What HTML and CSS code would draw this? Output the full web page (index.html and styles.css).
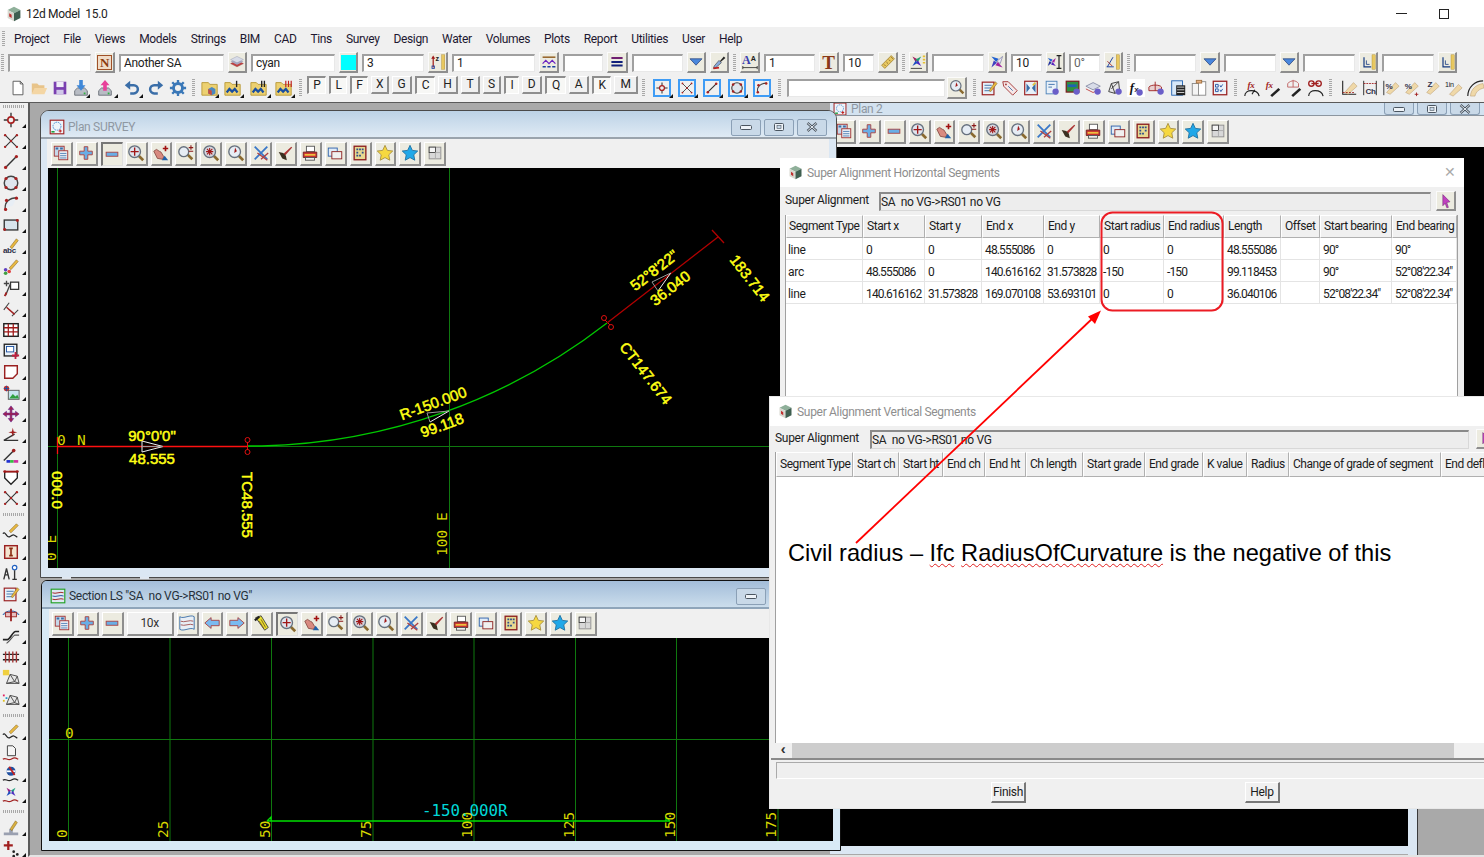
FILE: index.html
```html
<!DOCTYPE html>
<html lang="en">
<head>
<meta charset="utf-8">
<title>12d Model 15.0</title>
<link rel="stylesheet" href="styles.css">
</head>
<body>
<svg class="defs" aria-hidden="true">
<defs>
<symbol id="cmin" viewBox="0 0 16 10"><rect x="2.500" y="3.500" width="11" height="4" rx="1" fill="#eef3f8" stroke="#4a5560"/></symbol>
<symbol id="cmax" viewBox="0 0 16 10"><rect x="3.500" y="1.500" width="9" height="7" rx="1" fill="#eef3f8" stroke="#4a5560"/><rect x="6" y="3.500" width="4" height="3" fill="#c9d9e8" stroke="#4a5560" stroke-width=".6"/></symbol>
<symbol id="cx" viewBox="0 0 16 10"><path d="M3.500 1l9 8M12.500 1l-9 8" stroke="#4a5560" stroke-width="2.400"/><path d="M3.500 1l9 8M12.500 1l-9 8" stroke="#e8eef4" stroke-width="1"/></symbol>
<symbol id="cube" viewBox="0 0 20 20"><path d="M2 5l8-4 8 4-8 4z" fill="#8fb09a"/><path d="M2 5l8 4v10l-8-4z" fill="#d8d8d0"/><path d="M10 9l8-4v10l-8 4z" fill="#3f5f50"/><path d="M4 9l3 2v4l-3-2z" fill="#c03030"/></symbol>
<symbol id="sheet" viewBox="0 0 20 20"><rect x="2.500" y="2.500" width="11" height="11" fill="#c6d8ea" stroke="#a03030"/><path d="M4 5h3M9 5h3" stroke="#3a6ea8" stroke-width="2"/><rect x="7.500" y="7.500" width="10" height="10" fill="#e8eef5" stroke="#a03030"/><path d="M9 10.500h7M9 13h7M9 15.500h7" stroke="#4f7fb5"/></symbol>
<symbol id="plus" viewBox="0 0 20 20"><path d="M8 3h4v5h5v4h-5v5H8v-5H3V8h5z" fill="#69aee6" stroke="#a84040"/></symbol>
<symbol id="minus" viewBox="0 0 20 20"><rect x="3.500" y="8" width="13" height="4.500" fill="#69aee6" stroke="#a84040"/></symbol>
<symbol id="zm" viewBox="0 0 20 20"><path d="M13 13l5 5" stroke="#8a6a30" stroke-width="3"/><circle cx="8.500" cy="8.500" r="6.500" fill="#dfe5ee" stroke="#66707e" stroke-width="1.500"/><path d="M8.500 4v9M4 8.500h9" stroke="#a01818" stroke-width="1.500"/></symbol>
<symbol id="zpm" viewBox="0 0 20 20"><path d="M11 11l6 6" stroke="#8a6a30" stroke-width="3"/><circle cx="7.500" cy="8.500" r="5.500" fill="#e6edf5" stroke="#66707e" stroke-width="1.500"/><path d="M13 4h5M15.500 1.500v5M13 8h5" stroke="#8a1818" stroke-width="1.200"/></symbol>
<symbol id="zred" viewBox="0 0 20 20"><path d="M13 13l5 5" stroke="#8a6a30" stroke-width="3"/><circle cx="8.500" cy="8.500" r="6.500" fill="#d5d8e0" stroke="#66707e" stroke-width="1.500"/><path d="M5.500 5.500l6 6M11.500 5.500l-6 6M8.500 4.500v8M4.500 8.500h8" stroke="#a01818" stroke-width="1.200"/></symbol>
<symbol id="zpt" viewBox="0 0 20 20"><path d="M13 13l5 5" stroke="#8a6a30" stroke-width="3"/><circle cx="8.500" cy="8.500" r="6.500" fill="#e6edf5" stroke="#66707e" stroke-width="1.500"/><path d="M9 4l-1 6 3-2z" fill="#a01818"/></symbol>
<symbol id="hand" viewBox="0 0 20 20"><path d="M2 8l3-2 3 2 2 1 3 5-1 3-6-1z" fill="#d88a80" stroke="#8c5048"/><path d="M11 18l3-5 4 5z" fill="#2060a8"/><path d="M15 2v6M12 5h6" stroke="#a01010" stroke-width="1.800"/></symbol>
<symbol id="xchk" viewBox="0 0 20 20"><path d="M3 3l14 14M3 17L17 3" stroke="#3a78c8" stroke-width="2"/><path d="M6 10l11 8M10 17l8-7" stroke="#b04040" stroke-width="1.500"/></symbol>
<symbol id="brush" viewBox="0 0 20 20"><path d="M8 11L17 3l1 1-8 9z" fill="#a33"/><path d="M3 9l5 1 3 3 1 5-5-2z" fill="#3a3020"/></symbol>
<symbol id="print" viewBox="0 0 20 20"><rect x="6" y="2.500" width="9" height="6" fill="#fff" stroke="#555"/><path d="M2.500 9h15v6h-15z" fill="#c83030" stroke="#702020"/><path d="M4 12h12" stroke="#f0c040" stroke-width="2"/><rect x="5" y="15" width="10" height="3" fill="#eee" stroke="#555"/></symbol>
<symbol id="wins" viewBox="0 0 20 20"><rect x="2.500" y="4.500" width="10" height="9" fill="#e0ecf8" stroke="#2a5fa8"/><rect x="6.500" y="8.500" width="11" height="8" fill="#f0f0f0" stroke="#8c2020"/></symbol>
<symbol id="grid" viewBox="0 0 20 20"><rect x="3.500" y="2.500" width="13" height="15" fill="#e8d890" stroke="#8c2020" stroke-width="1.500"/><path d="M6 5h2v2H6zM9 5h2v2H9zM12 5h2v2h-2zM6 8.500h2v2H6zM12 8.500h2v2h-2zM6 12h2v2H6zM9 12h2v2H9z" fill="#2d4f8c"/></symbol>
<symbol id="stary" viewBox="0 0 20 20"><path d="M10 1.500l2.600 5.600 6 .7-4.400 4.200 1.100 6L10 15.100 4.700 18l1.100-6-4.400-4.200 6-.7z" fill="#f6d840" stroke="#a89040"/></symbol>
<symbol id="starb" viewBox="0 0 20 20"><path d="M10 1.500l2.600 5.600 6 .7-4.400 4.200 1.100 6L10 15.100 4.700 18l1.100-6-4.400-4.200 6-.7z" fill="#20a8e8" stroke="#2070a0"/></symbol>
<symbol id="panes" viewBox="0 0 20 20"><rect x="3.500" y="3.500" width="13" height="13" fill="#d8d8d8" stroke="#8c8c8c"/><rect x="3.500" y="3.500" width="7" height="6" fill="#f5f5f5" stroke="#444"/><path d="M10.500 9.500v7M10.500 9.500h6" stroke="#aaa"/></symbol>
<symbol id="layers" viewBox="0 0 20 20"><path d="M2 12l8-4 8 4-8 4z" fill="#c04040" stroke="#903030" stroke-width=".5"/><path d="M2 9.500l8-4 8 4-8 4z" fill="#a8a8c0"/><path d="M2 7l8-4 8 4-8 4z" fill="#d8dce8" stroke="#8a90a8" stroke-width=".5"/></symbol>
<symbol id="zr" viewBox="0 0 20 20"><path d="M4 4v13" stroke="#a01818" stroke-width="1.500"/><path d="M1.500 6L4 2l2.500 4z" fill="#a01818"/><rect x="2.500" y="15" width="3" height="3" fill="none" stroke="#1a3fa0"/><text x="7" y="9" class="svgb">z</text><rect x="14.500" y="1" width="4" height="18" fill="#e8c860" stroke="#a88830" stroke-width=".5"/></symbol>
<symbol id="zig" viewBox="0 0 20 20"><path d="M2 4h16" stroke="#9a6a30" stroke-width="2"/><path d="M2 12l4-4 4 4 4-4 4 4" fill="none" stroke="#6a20c0" stroke-width="1.500"/><path d="M2 16h4M8 16h4M14 16h4" stroke="#1a3fa0" stroke-width="2"/></symbol>
<symbol id="lines" viewBox="0 0 20 20"><path d="M3 5h14" stroke="#702070" stroke-width="2.500"/><path d="M3 10h14M3 14.500h14" stroke="#10207a" stroke-width="2.500"/></symbol>
<symbol id="tri" viewBox="0 0 20 20"><path d="M2.500 6h15L10 14z" fill="#4a88dc" stroke="#304a80"/></symbol>
<symbol id="drop" viewBox="0 0 20 20"><path d="M11 9l5-6 2 2-6 5z" fill="#222"/><path d="M10 8l3 3-7 6-3 1 1-3z" fill="#8ad" stroke="#333" stroke-width=".7"/><path d="M3 18l7-1" stroke="#c02020" stroke-width="2"/></symbol>
<symbol id="aa" viewBox="0 0 20 20"><text x="0" y="13" class="svgaa">A</text><text x="11" y="9" class="svgab">A</text><path d="M1 17h18" stroke="#222"/><path d="M1 15v4M19 15v4" stroke="#222"/></symbol>
<symbol id="rule" viewBox="0 0 20 20"><path d="M2 14L14 2l4 4L6 18z" fill="#e8c860" stroke="#a08030"/><path d="M5 13l2 2M8 10l2 2M11 7l2 2M14 4l2 2" stroke="#806020"/></symbol>
<symbol id="pin" viewBox="0 0 20 20"><path d="M3 3l7 4-3 3z" fill="#a02060"/><path d="M14 3l-4 7-3-3z" fill="#20a070"/><path d="M14 15l-7-4 3-3z" fill="#5020c0"/><path d="M3 15l4-7 3 3z" fill="#2050c0"/><path d="M1 18h14" stroke="#222"/><path d="M16 3h3M16 7h3M16 11h3" stroke="#e8c030" stroke-width="2"/></symbol>
<symbol id="pin2" viewBox="0 0 20 20"><path d="M3 3l9 3-3 4z" fill="#2060d0"/><path d="M17 3l-3 9-4-3z" fill="#e8e8f8" stroke="#88a"/><path d="M17 17l-9-3 3-4z" fill="#a020a0"/><path d="M3 17l3-9 4 3z" fill="#4040c0"/></symbol>
<symbol id="pin3" viewBox="0 0 20 20"><path d="M1 5l6 2-2 3z" fill="#2060d0"/><path d="M11 5l-2 6-3-2z" fill="#a020a0"/><path d="M11 15l-6-2 2-3z" fill="#5020c0"/><path d="M1 15l2-6 3 2z" fill="#2030a0"/><path d="M15 2v16M12 2h6M12 18h6" stroke="#222" stroke-width="1.500"/></symbol>
<symbol id="dimr" viewBox="0 0 20 20"><path d="M2 16h9M3 16L10 4" stroke="#1a3fa0" stroke-width="1.200"/><path d="M3 9l6 6" stroke="#a01818"/><rect x="14" y="1" width="4" height="18" fill="#e8c860" stroke="#a88830" stroke-width=".5"/></symbol>
<symbol id="ltool" viewBox="0 0 20 20"><path d="M5 4v12h9" fill="none" stroke="#143a80" stroke-width="1.500"/><path d="M8 8v5h4" fill="none" stroke="#143a80"/><rect x="15" y="1" width="4" height="18" fill="#e8c860" stroke="#a88830" stroke-width=".5"/></symbol>
<symbol id="new" viewBox="0 0 20 20"><path d="M4.500 2.500h8l3 3v12h-11z" fill="#fff" stroke="#555"/><path d="M12.500 2.500v3h3" fill="none" stroke="#555"/></symbol>
<symbol id="open" viewBox="0 0 20 20"><path d="M2 5h6l2 2h6v3H6l-4 7z" fill="#e8c48a"/><path d="M5 10h14l-3 7H2z" fill="#f4d6a4"/></symbol>
<symbol id="save" viewBox="0 0 20 20"><path d="M3 3h14v14H3z" fill="#7a3fb0"/><path d="M6 3h8v6H6z" fill="#f0ecf8"/><path d="M6 12h8v5H6z" fill="#d0c8e8"/></symbol>
<symbol id="imp" viewBox="0 0 20 20"><path d="M3 13l3-3h8l3 3v5H3z" fill="#b8bcc4" stroke="#6a6f78"/><path d="M8 1h4v6h3l-5 6-5-6h3z" fill="#3f88d8"/><rect x="13" y="15" width="2" height="2" fill="#30b040"/></symbol>
<symbol id="exp" viewBox="0 0 20 20"><path d="M3 13l3-3h8l3 3v5H3z" fill="#b8bcc4" stroke="#6a6f78"/><path d="M8 13V7H5l5-6 5 6h-3v6z" fill="#e8409a"/><rect x="13" y="15" width="2" height="2" fill="#30b040"/></symbol>
<symbol id="undo" viewBox="0 0 20 20"><path d="M6 7h6a4.500 4.500 0 0 1 0 9H8" fill="none" stroke="#3a6ea8" stroke-width="2.800"/><path d="M8 2v10L2 7z" fill="#3a6ea8"/></symbol>
<symbol id="redo" viewBox="0 0 20 20"><path d="M14 7H8a4.500 4.500 0 0 0 0 9h4" fill="none" stroke="#3a6ea8" stroke-width="2.800"/><path d="M12 2v10l6-5z" fill="#3a6ea8"/></symbol>
<symbol id="gear" viewBox="0 0 20 20"><circle cx="10" cy="10" r="5" fill="none" stroke="#3a78b8" stroke-width="3.200"/><path d="M10 1v4M10 15v4M1 10h4M15 10h4M3.600 3.600l3 3M13.400 13.400l3 3M16.400 3.600l-3 3M6.600 13.400l-3 3" stroke="#3a78b8" stroke-width="2.600"/></symbol>
<symbol id="fbox" viewBox="0 0 20 20"><path d="M1 4h7l2 2h8v12H1z" fill="#ecd070" stroke="#b89838"/><path d="M8 11l4-2 4 2v5l-4 2-4-2z" fill="#4a88c0"/><path d="M8 11l4 2v5l-4-2z" fill="#c85040"/></symbol>
<symbol id="f1" viewBox="0 0 20 20"><path d="M1 4h6l2 2h9v12H1z" fill="#ecd070" stroke="#b89838"/><path d="M3 15l3-4 3 3 3-3 3 4" fill="none" stroke="#1a4fa0" stroke-width="2.500"/><path d="M14 2v7" stroke="#222" stroke-width="1.500"/></symbol>
<symbol id="f2" viewBox="0 0 20 20"><path d="M1 4h6l2 2h9v12H1z" fill="#ecd070" stroke="#b89838"/><path d="M3 15l3-4 3 3 3-3 3 4" fill="none" stroke="#1a4fa0" stroke-width="2.500"/><path d="M13 2v7M16 2v7" stroke="#222" stroke-width="1.500"/></symbol>
<symbol id="f3" viewBox="0 0 20 20"><path d="M1 4h6l2 2h9v12H1z" fill="#ecd070" stroke="#b89838"/><path d="M3 15l3-4 3 3 3-3 3 4" fill="none" stroke="#1a4fa0" stroke-width="2.500"/><path d="M12 2v7M15 2v7M18 2v7" stroke="#c02020" stroke-width="1.300"/></symbol>
<symbol id="pt" viewBox="0 0 20 20"><path d="M10 2v16M2 10h16" stroke="#333" stroke-width="1.500"/><circle cx="10" cy="10" r="3.500" fill="#f0f0f0" stroke="#a82020" stroke-width="1.800"/></symbol>
<symbol id="x" viewBox="0 0 20 20"><path d="M3 3l14 14M17 3L3 17" stroke="#333" stroke-width="1.200"/><circle cx="3.500" cy="3.500" r="1.300" fill="#a82020"/><circle cx="16.500" cy="3.500" r="1.300" fill="#a82020"/><circle cx="10" cy="10" r="1.300" fill="#a82020"/><circle cx="3.500" cy="16.500" r="1.300" fill="#a82020"/><circle cx="16.500" cy="16.500" r="1.300" fill="#a82020"/></symbol>
<symbol id="ln" viewBox="0 0 20 20"><path d="M4 16L16 4" stroke="#333" stroke-width="1.600"/><circle cx="4" cy="16" r="1.800" fill="#a82020"/><circle cx="16" cy="4" r="1.800" fill="#a82020"/></symbol>
<symbol id="ci" viewBox="0 0 20 20"><circle cx="10" cy="10" r="7.500" fill="#dfe6ee" stroke="#444" stroke-width="1.600"/><circle cx="4.500" cy="5" r="1.800" fill="#a82020"/><circle cx="15.500" cy="5" r="1.800" fill="#a82020"/><circle cx="4.500" cy="15" r="1.800" fill="#a82020"/><circle cx="15.500" cy="15" r="1.800" fill="#a82020"/></symbol>
<symbol id="ar" viewBox="0 0 20 20"><path d="M4 17C2 8 8 3 17 3" fill="none" stroke="#444" stroke-width="1.600"/><path d="M4 14C5 8 9 5 15 5l-3 7z" fill="#e8eef5"/><circle cx="4" cy="16" r="1.800" fill="#a82020"/><circle cx="5" cy="6" r="1.800" fill="#a82020"/><circle cx="16" cy="3.500" r="1.800" fill="#a82020"/></symbol>
<symbol id="rc" viewBox="0 0 20 20"><rect x="2.500" y="4.500" width="15" height="11" fill="#d8e4ec" stroke="#333" stroke-width="1.500"/><circle cx="3" cy="15" r="1.600" fill="#a82020"/><circle cx="17" cy="5" r="1.600" fill="#a82020"/></symbol>
<symbol id="abc" viewBox="0 0 20 20"><path d="M9 11L16 2l2 2-7 9z" fill="#e8b840" stroke="#806020" stroke-width=".6"/><text x="1" y="18" class="svgsm">abc</text></symbol>
<symbol id="pen2" viewBox="0 0 20 20"><path d="M8 11L16 2l2 2-8 9z" fill="#e8b840" stroke="#806020" stroke-width=".6"/><circle cx="4" cy="13" r="2" fill="#6040c0"/><circle cx="8" cy="15" r="2" fill="#e04040"/><circle cx="4" cy="17" r="2" fill="#40a040"/></symbol>
<symbol id="tbox" viewBox="0 0 20 20"><rect x="9.500" y="3.500" width="9" height="8" fill="#fff" stroke="#333" stroke-width="1.400"/><path d="M4 18L9 6M2 5h6M5 2v6" stroke="#444" stroke-width="1.500"/><path d="M3 19l2-4" stroke="#a02020" stroke-width="2"/></symbol>
<symbol id="dimv" viewBox="0 0 20 20"><path d="M2 11L8 3M11 18l7-7" stroke="#444" stroke-width="1.200"/><path d="M5 8l9 8" stroke="#a02020" stroke-width="1.600"/></symbol>
<symbol id="table" viewBox="0 0 20 20"><rect x="2" y="3" width="16" height="14" fill="#fff" stroke="#222" stroke-width="1.600"/><path d="M2 7.500h16M2 12h16M7 3v14M12.500 3v14" stroke="#a01818" stroke-width="1.400"/></symbol>
<symbol id="boxp" viewBox="0 0 20 20"><rect x="2.500" y="2.500" width="14" height="13" fill="#e8f0f8" stroke="#222" stroke-width="1.500"/><rect x="5" y="5" width="8" height="6" fill="#fff" stroke="#1a4fa0"/><path d="M15 11v8M11 15h8" stroke="#c02040" stroke-width="2"/></symbol>
<symbol id="corn" viewBox="0 0 20 20"><path d="M3 3h14v9l-5 5H3z" fill="#fff" stroke="#9a2020" stroke-width="1.600"/></symbol>
<symbol id="pic" viewBox="0 0 20 20"><rect x="7" y="7" width="12" height="10" fill="#c8e4f0" stroke="#555"/><path d="M8 16l4-5 3 3 2-2 2 4z" fill="#30a040"/><circle cx="5" cy="5" r="3" fill="#c03030"/><path d="M2 5h6M5 2v6" stroke="#2050a0"/></symbol>
<symbol id="move" viewBox="0 0 20 20"><path d="M10 1l3 4h-2v4h4V7l4 3-4 3v-2h-4v4h2l-3 4-3-4h2v-4H5v2l-4-3 4-3v2h4V5H7z" fill="#a02050" stroke="#6a2a90" stroke-width=".7"/></symbol>
<symbol id="ang" viewBox="0 0 20 20"><path d="M2 16h16M2 16L14 9" stroke="#333" stroke-width="1.400"/><path d="M12 2l1 4 4 1-4 1-1 4-1-4-4-1 4-1z" fill="#a02020"/></symbol>
<symbol id="lnc" viewBox="0 0 20 20"><path d="M2 15L14 3" stroke="#333" stroke-width="1.600"/><circle cx="13" cy="4" r="2" fill="#a02020"/><path d="M5 16h4" stroke="#2030d0" stroke-width="3"/><path d="M9 16h4" stroke="#30c040" stroke-width="3"/><path d="M13 16h5" stroke="#d030a0" stroke-width="3"/></symbol>
<symbol id="poly" viewBox="0 0 20 20"><path d="M3 4h14v7l-7 7-7-7z" fill="#fff" stroke="#222" stroke-width="1.500"/><path d="M3 4h14" stroke="#a01818" stroke-width="2"/><circle cx="3" cy="4" r="1.600" fill="#a01818"/><circle cx="17" cy="4" r="1.600" fill="#a01818"/></symbol>
<symbol id="wpen" viewBox="0 0 20 20"><path d="M8 10L16 2l2 2-8 8z" fill="#e8b840" stroke="#806020" stroke-width=".6"/><path d="M1 13c3-4 4 6 8 3s4-2 8 1" fill="none" stroke="#222" stroke-width="1.400"/></symbol>
<symbol id="ibox" viewBox="0 0 20 20"><rect x="3" y="3" width="14" height="14" fill="#f4e4d0" stroke="#9a2020" stroke-width="1.600"/><path d="M8 6h4M8 14h4M10 6v8" stroke="#8a2a10" stroke-width="1.800"/></symbol>
<symbol id="ai" viewBox="0 0 20 20"><path d="M2 17l3-12 3 12M3.500 12h3" fill="none" stroke="#333" stroke-width="1.500"/><circle cx="14" cy="4" r="2.500" fill="#fff" stroke="#2060c0" stroke-width="1.300"/><path d="M14 7v10M11.500 17h5" stroke="#333" stroke-width="1.500"/></symbol>
<symbol id="note" viewBox="0 0 20 20"><rect x="2.500" y="3.500" width="13" height="14" fill="#e8f0f8" stroke="#9a2020" stroke-width="1.300"/><path d="M5 7h8M5 10h8M5 13h6" stroke="#3a6ea8"/><path d="M10 13l7-10 2 2-7 9z" fill="#e8b840" stroke="#705010" stroke-width=".5"/></symbol>
<symbol id="crs" viewBox="0 0 20 20"><path d="M1 10c3-6 15-6 18 0" fill="#a8c8e0" stroke="#2050a0"/><rect x="4" y="7" width="12" height="5" fill="#e8c0c0" stroke="#9a2020"/><path d="M10 3v14" stroke="#9a2020" stroke-width="2"/></symbol>
<symbol id="bend" viewBox="0 0 20 20"><path d="M1 14h5c3 0 6-9 9-9h4" fill="none" stroke="#222" stroke-width="1.800"/><path d="M5 18c3-1 6-7 9-9h5" fill="none" stroke="#555" stroke-width="1.200"/></symbol>
<symbol id="rail" viewBox="0 0 20 20"><path d="M1 7h18M1 13h18" stroke="#222" stroke-width="1.500"/><path d="M4 4v12M8 4v12M12 4v12M16 4v12" stroke="#a03030" stroke-width="1.500"/></symbol>
<symbol id="mesh1" viewBox="0 0 20 20"><path d="M5 16l4-10 8 2 2 8z" fill="#e8e8e8" stroke="#444"/><path d="M5 16l9-2 3-6M9 6l5 8 5 2" fill="none" stroke="#444"/><rect x="1" y="1" width="7" height="6" fill="#f0d040"/></symbol>
<symbol id="mesh2" viewBox="0 0 20 20"><path d="M5 16l4-10 8 2 2 8z" fill="#e8e8e8" stroke="#444"/><path d="M5 16l9-2 3-6M9 6l5 8 5 2" fill="none" stroke="#444"/><rect x="1" y="5" width="2" height="2" fill="#e02060"/><rect x="4" y="8" width="2" height="2" fill="#20a0d0"/><rect x="1" y="11" width="2" height="2" fill="#e0c020"/></symbol>
<symbol id="wdoc" viewBox="0 0 20 20"><path d="M6 2h6l3 3v8H6z" fill="#f4f4f4" stroke="#333"/><path d="M1 17c3-3 5 2 9 0s4-2 8 0" fill="none" stroke="#a02020" stroke-width="1.400"/></symbol>
<symbol id="wglobe" viewBox="0 0 20 20"><circle cx="10" cy="7" r="5" fill="#2050a0"/><path d="M5 7h10" stroke="#fff" stroke-width="2"/><path d="M8 2l6 9" stroke="#c02020" stroke-width="2"/><path d="M1 17c3-3 5 2 9 0s4-2 8 0" fill="none" stroke="#222" stroke-width="1.400"/></symbol>
<symbol id="wpin" viewBox="0 0 20 20"><path d="M5 2l5 3-2 3z" fill="#a02080"/><path d="M15 2l-3 6-2-3z" fill="#20a080"/><path d="M15 11l-5-3 2-3z" fill="#5030c0"/><path d="M5 11l3-6 2 3z" fill="#2050c0"/><path d="M1 17c3-3 5 2 9 0s4-2 8 0" fill="none" stroke="#a02020" stroke-width="1.400"/></symbol>
<symbol id="ibeam" viewBox="0 0 20 20"><path d="M2 15h16v3H2zM8 11h4v4H8z" fill="#9aa0b0"/><path d="M9 11l6-9 2 2-6 9z" fill="#d8b040" stroke="#705010" stroke-width=".5"/></symbol>
<symbol id="mv2" viewBox="0 0 20 20"><path d="M7 1v10M2 6h10" stroke="#a02020" stroke-width="2.500"/><circle cx="13" cy="13" r="1.500" fill="#222"/><circle cx="17" cy="16" r="1.500" fill="#222"/><circle cx="13" cy="18" r="1.500" fill="#222"/></symbol>
<symbol id="tag" viewBox="0 0 20 20"><path d="M2 3h6l10 10-5 5L3 8z" fill="#f6e8e8" stroke="#a03030"/><circle cx="5.500" cy="6" r="1" fill="#a03030"/><path d="M8 8l5 5" stroke="#3a6ea8"/></symbol>
<symbol id="bdoc" viewBox="0 0 20 20"><rect x="3" y="2.500" width="14" height="15" fill="#e8f0f8" stroke="#9a2020" stroke-width="1.300"/><path d="M5 5l4 5-4 5zM15 5l-4 5 4 5z" fill="#3a6ea8"/><path d="M12 7l3-3" stroke="#e0c040" stroke-width="2"/></symbol>
<symbol id="gdoc" viewBox="0 0 20 20"><rect x="3.500" y="2.500" width="12" height="14" fill="#e8f0f8" stroke="#4a80b8"/><path d="M6 6h7M6 9h4" stroke="#3a6ea8"/><circle cx="14" cy="14" r="3.500" fill="#6a5ec8"/></symbol>
<symbol id="gpic" viewBox="0 0 20 20"><rect x="2.500" y="2.500" width="14" height="12" fill="#309040" stroke="#7a2020" stroke-width="1.400"/><path d="M4 6h10v3H4z" fill="#2060b0"/><circle cx="14" cy="14" r="3.500" fill="#6a5ec8"/></symbol>
<symbol id="glay" viewBox="0 0 20 20"><path d="M1 8l8-4 8 4-8 4z" fill="#d8dce8" stroke="#8a90a8"/><path d="M1 11l8 4 6-3" fill="none" stroke="#c04040"/><circle cx="14" cy="14" r="3.500" fill="#6a5ec8"/></symbol>
<symbol id="gmsh" viewBox="0 0 20 20"><path d="M3 14l3-9 8-2 1 9-5 4z" fill="#e8e8e8" stroke="#333"/><path d="M6 5l4 11M14 3l-8 8" stroke="#333"/><circle cx="14" cy="14" r="3.500" fill="#6a5ec8"/></symbol>
<symbol id="fx" viewBox="0 0 20 20"><rect width="20" height="20" fill="#fff"/><text x="3" y="14" class="svgfx">f</text><text x="8" y="14" class="svgsm">x</text><circle cx="14" cy="15" r="3.500" fill="#6a5ec8"/></symbol>
<symbol id="cgear" viewBox="0 0 20 20"><path d="M1 9c2-3 12-3 14 0v4H1z" fill="#e8d0d0" stroke="#a02020"/><path d="M8 3v10" stroke="#a02020"/><circle cx="14" cy="14" r="3.500" fill="#6a5ec8"/></symbol>
<symbol id="ldoc" viewBox="0 0 20 20"><rect x="3" y="2" width="12" height="16" fill="#d8e8f8" stroke="#2060b0"/><rect x="8" y="7" width="10" height="11" fill="#222"/><path d="M9 9h8M9 12h8M9 15h8" stroke="#ddd"/></symbol>
<symbol id="paste" viewBox="0 0 20 20"><rect x="2.500" y="5" width="8" height="13" fill="#f4f4f4" stroke="#888"/><rect x="9.500" y="3" width="8" height="15" fill="#fff" stroke="#888"/><rect x="7" y="1.500" width="6" height="3" fill="#e8b080" stroke="#a07040"/></symbol>
<symbol id="chk" viewBox="0 0 20 20"><rect x="2.500" y="2.500" width="15" height="15" fill="#eef2f8" stroke="#9a2020" stroke-width="1.400"/><path d="M5 6h3v3H5zM5 11h3v3H5zM10 7l1 2 2-3M10 12l1 2 2-3" fill="none" stroke="#2050a0"/></symbol>
<symbol id="fxg" viewBox="0 0 20 20"><text x="5" y="10" class="svgfr">fx</text><path d="M2 19c0-8 14-8 16 0M10 17l3-5" fill="none" stroke="#222" stroke-width="1.300"/></symbol>
<symbol id="fxp" viewBox="0 0 20 20"><text x="2" y="10" class="svgfr">fx</text><path d="M7 18l9-8 2 2-9 8z" fill="#222"/></symbol>
<symbol id="dip" viewBox="0 0 20 20"><path d="M3 5c4-4 9-4 12 0v4H3z" fill="none" stroke="#c06060"/><path d="M9 1v8" stroke="#c06060"/><path d="M7 18l9-8 2 2-9 8z" fill="#222"/></symbol>
<symbol id="chain" viewBox="0 0 20 20"><circle cx="6" cy="5" r="3" fill="none" stroke="#a02020" stroke-width="1.500"/><circle cx="14" cy="5" r="3" fill="none" stroke="#a02020" stroke-width="1.500"/><path d="M6 5h8" stroke="#a02020" stroke-width="1.500"/><path d="M3 19c0-8 14-8 16 0" fill="none" stroke="#222" stroke-width="1.300"/></symbol>
<symbol id="r1" viewBox="0 0 20 20"><path d="M3 2v15h15" fill="none" stroke="#222" stroke-width="1.200"/><path d="M5 15L15 4l4 4-10 9z" fill="#efd8a8" stroke="#b09060" stroke-width=".5"/><path d="M3 15h13" stroke="#a02020" stroke-dasharray="2 1.500"/></symbol>
<symbol id="rch" viewBox="0 0 20 20"><path d="M3 2v16M17 2v16" stroke="#222"/><path d="M3 5h14" stroke="#a02020" stroke-dasharray="2 1"/><text x="5" y="17" class="svgsm">Ch</text></symbol>
<symbol id="rpc" viewBox="0 0 20 20"><path d="M2 2v16" stroke="#222"/><path d="M5 15L15 4l4 4-10 9z" fill="#efd8a8" stroke="#b09060" stroke-width=".5"/><text x="4" y="11" class="svgsm">%</text></symbol>
<symbol id="rpc2" viewBox="0 0 20 20"><path d="M3 15L13 4l4 4-10 9z" fill="#efd8a8" stroke="#b09060" stroke-width=".5"/><text x="2" y="11" class="svgsm">%</text><path d="M15 15v4M13 17h4" stroke="#a02020"/></symbol>
<symbol id="rz" viewBox="0 0 20 20"><path d="M3 15L13 4l4 4-10 9z" fill="#efd8a8" stroke="#b09060" stroke-width=".5"/><text x="4" y="9" class="svgsm">Z</text></symbol>
<symbol id="rin" viewBox="0 0 20 20"><path d="M5 17L15 6l4 4-10 9z" fill="#efd8a8" stroke="#b09060" stroke-width=".5"/><text x="0" y="9" class="svgtiny">1in</text></symbol>
<symbol id="rcv" viewBox="0 0 20 20"><path d="M2 19C2 9 10 2 19 2" fill="none" stroke="#222" stroke-width="1.300"/><path d="M5 19C5 12 11 6 19 5l1 5C15 11 11 14 10 19z" fill="#efd8a8" stroke="#b09060" stroke-width=".5"/></symbol>
<symbol id="wave" viewBox="0 0 20 20"><path d="M2 3c4 3 12-3 16 0v14c-4-3-12 3-16 0z" fill="#e8eef5" stroke="#3a6ea8"/><path d="M3 8c4 2 10-2 14 0M3 12c4 2 10-2 14 0" fill="none" stroke="#a05050"/></symbol>
<symbol id="wsec" viewBox="0 0 20 20"><rect x="1.500" y="1.500" width="17" height="17" fill="#dfe8f3" stroke="#20a020" stroke-width="1.400"/><path d="M3 6c4 2 10-2 14 0" fill="none" stroke="#a02020" stroke-width="1.200"/><path d="M3 10c4 2 10-2 14 0" fill="none" stroke="#2050a0" stroke-width="1.200"/><path d="M3 14c4 2 10-2 14 0" fill="none" stroke="#a02020" stroke-width="1.200"/></symbol>
<symbol id="wplan" viewBox="0 0 20 20"><rect x="1.500" y="1.500" width="17" height="17" fill="#eef4fa" stroke="#a02020" stroke-width="1.400"/><circle cx="10" cy="9" r="5" fill="none" stroke="#2a78c8" stroke-dasharray="2 1"/><path d="M3 16h4" stroke="#20a040" stroke-width="2"/><path d="M14 13v4M12 15h4" stroke="#c02020" stroke-width="1.500"/></symbol>
<symbol id="al" viewBox="0 0 20 20"><path d="M2 10l7-6v3h9v6H9v3z" fill="#7abaf0" stroke="#a84040"/></symbol>
<symbol id="arr" viewBox="0 0 20 20"><path d="M18 10l-7-6v3H2v6h9v3z" fill="#7abaf0" stroke="#a84040"/></symbol>
<symbol id="tor" viewBox="0 0 20 20"><path d="M3 4l6-2 8 13-4 3z" fill="#e8e030" stroke="#444"/><path d="M2 7l5-4" stroke="#222" stroke-width="2.500"/><path d="M9 6l5 9M7 8l5 8" stroke="#806020"/></symbol>
<symbol id="ptr" viewBox="0 0 20 20"><path d="M6 2l9 9-4 1 2 6-2 .500-2-5.500-3 3z" fill="#c040c0" stroke="#602060" stroke-width=".6"/></symbol>
</defs>
</svg>

<div class="app">
  <header class="titlebar">
    <svg class="tico"><use href="#cube"/></svg>
    <span class="apptitle">12d Model&nbsp;&nbsp;15.0</span>
    <span class="winmin"></span>
    <span class="winmax"></span>
  </header>

  <nav class="menubar">
    <span class="grip"></span>
    <span>Project</span><span>File</span><span>Views</span><span>Models</span><span>Strings</span><span>BIM</span><span>CAD</span><span>Tins</span><span>Survey</span><span>Design</span><span>Water</span><span>Volumes</span><span>Plots</span><span>Report</span><span>Utilities</span><span>User</span><span>Help</span>
  </nav>

  <div class="row1">
    <span class="grip"></span>
    <span class="field w83"></span>
    <span class="btn w20"><span class="nbox">N</span></span>
    <span class="field w105">Another SA</span>
    <span class="btn"><svg class="i"><use href="#layers"/></svg></span>
    <span class="field w84">cyan</span>
    <span class="btn"><span class="swatch"></span></span>
    <span class="field w62">3</span>
    <span class="btn w20"><svg class="i"><use href="#zr"/></svg></span>
    <span class="field w83">1</span>
    <span class="btn w20"><svg class="i"><use href="#zig"/></svg></span>
    <span class="field w40"></span>
    <span class="btn w21"><svg class="i"><use href="#lines"/></svg></span>
    <span class="field w51"></span>
    <span class="btn"><svg class="i"><use href="#tri"/></svg></span>
    <span class="btn"><svg class="i"><use href="#drop"/></svg></span>
    <span class="grip"></span>
    <span class="btn w20"><svg class="i"><use href="#aa"/></svg></span>
    <span class="field w51">1</span>
    <span class="btn w20"><span class="tbox">T</span></span>
    <span class="field w31">10</span>
    <span class="btn w20"><svg class="i"><use href="#rule"/></svg></span>
    <span class="grip"></span>
    <span class="btn"><svg class="i"><use href="#pin"/></svg></span>
    <span class="field w52"></span>
    <span class="btn"><svg class="i"><use href="#pin2"/></svg></span>
    <span class="field w31">10</span>
    <span class="btn"><svg class="i"><use href="#pin3"/></svg></span>
    <span class="field w31 muted">0°</span>
    <span class="btn"><svg class="i"><use href="#dimr"/></svg></span>
    <span class="grip"></span>
    <span class="field w62"></span>
    <span class="btn w20"><svg class="i"><use href="#tri"/></svg></span>
    <span class="field w52"></span>
    <span class="btn"><svg class="i"><use href="#tri"/></svg></span>
    <span class="field w52"></span>
    <span class="btn"><svg class="i"><use href="#ltool"/></svg></span>
    <span class="field w52"></span>
    <span class="btn"><svg class="i"><use href="#ltool"/></svg></span>
  </div>

  <div class="row2">
    <span class="cell"><svg class="i"><use href="#new"/></svg></span>
    <span class="cell"><svg class="i"><use href="#open"/></svg></span>
    <span class="cell"><svg class="i"><use href="#save"/></svg></span>
    <span class="cell dd"><svg class="i"><use href="#imp"/></svg></span>
    <span class="cell c28 dd"><svg class="i"><use href="#exp"/></svg></span>
    <span class="cell c25 dd"><svg class="i"><use href="#undo"/></svg></span>
    <span class="cell c23"><svg class="i"><use href="#redo"/></svg></span>
    <span class="cell"><svg class="i"><use href="#gear"/></svg></span>
    <span class="grip g1"></span>
    <span class="cell dd"><svg class="i"><use href="#fbox"/></svg></span>
    <span class="cell c25 dd"><svg class="i"><use href="#f1"/></svg></span>
    <span class="cell c27 dd"><svg class="i"><use href="#f2"/></svg></span>
    <span class="cell c24 dd"><svg class="i"><use href="#f3"/></svg></span>
    <span class="grip g2"></span>
    <div class="letters">
      <span class="key down l19">P</span><span class="key down l18">L</span><span class="key down l18">F</span><span class="key l18">X</span><span class="key l20">G</span><span class="key down l20">C</span><span class="key l20">H</span><span class="key l19">T</span><span class="key l18">S</span><span class="key down l15">I</span><span class="key l20">D</span><span class="key down l21">Q</span><span class="key l20">A</span><span class="key down l19">K</span><span class="key l24">M</span>
    </div>
    <span class="grip g3"></span>
    <span class="cell c25 dd blue"><svg class="i"><use href="#pt"/></svg></span>
    <span class="cell c25 dd blue"><svg class="i"><use href="#x"/></svg></span>
    <span class="cell c25 dd blue"><svg class="i"><use href="#ln"/></svg></span>
    <span class="cell c25 dd blue"><svg class="i"><use href="#ci"/></svg></span>
    <span class="cell c25 dd blue"><svg class="i"><use href="#ar"/></svg></span>
    <span class="grip g4"></span>
    <span class="field w158"></span>
    <span class="btn w20 mag"><svg class="i"><use href="#zpt"/></svg></span>
    <span class="grip g5"></span>
    <span class="cell"><svg class="i"><use href="#note"/></svg></span>
    <span class="cell"><svg class="i"><use href="#tag"/></svg></span>
    <span class="cell"><svg class="i"><use href="#bdoc"/></svg></span>
    <span class="cell"><svg class="i"><use href="#gdoc"/></svg></span>
    <span class="cell"><svg class="i"><use href="#gpic"/></svg></span>
    <span class="cell"><svg class="i"><use href="#glay"/></svg></span>
    <span class="cell"><svg class="i"><use href="#gmsh"/></svg></span>
    <span class="cell"><svg class="i"><use href="#fx"/></svg></span>
    <span class="cell"><svg class="i"><use href="#cgear"/></svg></span>
    <span class="cell"><svg class="i"><use href="#ldoc"/></svg></span>
    <span class="cell"><svg class="i"><use href="#paste"/></svg></span>
    <span class="cell"><svg class="i"><use href="#chk"/></svg></span>
    <span class="grip g6"></span>
    <span class="cell"><svg class="i"><use href="#fxg"/></svg></span>
    <span class="cell"><svg class="i"><use href="#fxp"/></svg></span>
    <span class="cell"><svg class="i"><use href="#dip"/></svg></span>
    <span class="cell"><svg class="i"><use href="#chain"/></svg></span>
    <span class="grip g7"></span>
    <span class="cell"><svg class="i"><use href="#r1"/></svg></span>
    <span class="cell"><svg class="i"><use href="#rch"/></svg></span>
    <span class="cell"><svg class="i"><use href="#rpc"/></svg></span>
    <span class="cell"><svg class="i"><use href="#rpc2"/></svg></span>
    <span class="cell"><svg class="i"><use href="#rz"/></svg></span>
    <span class="cell"><svg class="i"><use href="#rin"/></svg></span>
    <span class="cell"><svg class="i"><use href="#rcv"/></svg></span>
  </div>

  <div class="work">
    <aside class="lefttools">
      <span class="hgrip first"></span>
      <span class="lcell dd"><svg class="i"><use href="#pt"/></svg></span>
      <span class="lcell dd"><svg class="i"><use href="#x"/></svg></span>
      <span class="lcell dd"><svg class="i"><use href="#ln"/></svg></span>
      <span class="lcell dd"><svg class="i"><use href="#ci"/></svg></span>
      <span class="lcell dd"><svg class="i"><use href="#ar"/></svg></span>
      <span class="lcell dd"><svg class="i"><use href="#rc"/></svg></span>
      <span class="lcell dd"><svg class="i"><use href="#abc"/></svg></span>
      <span class="lcell dd"><svg class="i"><use href="#pen2"/></svg></span>
      <span class="lcell dd"><svg class="i"><use href="#tbox"/></svg></span>
      <span class="lcell dd"><svg class="i"><use href="#dimv"/></svg></span>
      <span class="lcell dd"><svg class="i"><use href="#table"/></svg></span>
      <span class="lcell dd"><svg class="i"><use href="#boxp"/></svg></span>
      <span class="lcell dd"><svg class="i"><use href="#corn"/></svg></span>
      <span class="lcell dd"><svg class="i"><use href="#pic"/></svg></span>
      <span class="lcell dd"><svg class="i"><use href="#move"/></svg></span>
      <span class="lcell dd"><svg class="i"><use href="#ang"/></svg></span>
      <span class="lcell dd"><svg class="i"><use href="#lnc"/></svg></span>
      <span class="lcell dd"><svg class="i"><use href="#poly"/></svg></span>
      <span class="lcell dd"><svg class="i"><use href="#x"/></svg></span>
      <span class="hgrip"></span>
      <span class="lcell dd"><svg class="i"><use href="#wpen"/></svg></span>
      <span class="lcell dd"><svg class="i"><use href="#ibox"/></svg></span>
      <span class="lcell dd"><svg class="i"><use href="#ai"/></svg></span>
      <span class="lcell dd"><svg class="i"><use href="#note"/></svg></span>
      <span class="lcell dd"><svg class="i"><use href="#crs"/></svg></span>
      <span class="lcell dd"><svg class="i"><use href="#bend"/></svg></span>
      <span class="lcell dd"><svg class="i"><use href="#rail"/></svg></span>
      <span class="lcell dd"><svg class="i"><use href="#mesh1"/></svg></span>
      <span class="lcell dd"><svg class="i"><use href="#mesh2"/></svg></span>
      <span class="hgrip"></span>
      <span class="lcell dd"><svg class="i"><use href="#wpen"/></svg></span>
      <span class="lcell"><svg class="i"><use href="#wdoc"/></svg></span>
      <span class="lcell dd"><svg class="i"><use href="#wglobe"/></svg></span>
      <span class="lcell dd"><svg class="i"><use href="#wpin"/></svg></span>
      <span class="hgrip"></span>
      <span class="lcell dd"><svg class="i"><use href="#ibeam"/></svg></span>
      <span class="lcell dd"><svg class="i"><use href="#mv2"/></svg></span>
    </aside>

    <main class="desk">
      <!-- Plan 2 window, behind the others -->
      <section class="win plan2">
        <div class="w2title">
          <svg class="wico"><use href="#wplan"/></svg>
          <span class="wtext">Plan 2</span>
          <span class="capbtns tight"><span class="cap"><svg class="capi"><use href="#cmin"/></svg></span><span class="cap"><svg class="capi"><use href="#cmax"/></svg></span><span class="cap"><svg class="capi"><use href="#cx"/></svg></span></span>
        </div>
        <div class="wtools">
          <span class="tb"><svg class="i"><use href="#sheet"/></svg></span><span class="tb"><svg class="i"><use href="#plus"/></svg></span><span class="tb"><svg class="i"><use href="#minus"/></svg></span><span class="tb"><svg class="i"><use href="#zm"/></svg></span><span class="tb"><svg class="i"><use href="#hand"/></svg></span><span class="tb"><svg class="i"><use href="#zpm"/></svg></span><span class="tb"><svg class="i"><use href="#zred"/></svg></span><span class="tb"><svg class="i"><use href="#zpt"/></svg></span><span class="tb"><svg class="i"><use href="#xchk"/></svg></span><span class="tb"><svg class="i"><use href="#brush"/></svg></span><span class="tb"><svg class="i"><use href="#print"/></svg></span><span class="tb"><svg class="i"><use href="#wins"/></svg></span><span class="tb"><svg class="i"><use href="#grid"/></svg></span><span class="tb"><svg class="i"><use href="#stary"/></svg></span><span class="tb"><svg class="i"><use href="#starb"/></svg></span><span class="tb"><svg class="i"><use href="#panes"/></svg></span>
        </div>
        <div class="black"></div>
      </section>
      <div class="deskpatch"></div>

      <!-- Plan SURVEY window -->
      <section class="win survey">
        <div class="wtitle">
          <svg class="wico"><use href="#wplan"/></svg>
          <span class="wtext">Plan SURVEY</span>
          <span class="capbtns"><span class="cap"><svg class="capi"><use href="#cmin"/></svg></span><span class="cap"><svg class="capi"><use href="#cmax"/></svg></span><span class="cap"><svg class="capi"><use href="#cx"/></svg></span></span>
        </div>
        <div class="wtools">
          <span class="tb"><svg class="i"><use href="#sheet"/></svg></span><span class="tb"><svg class="i"><use href="#plus"/></svg></span><span class="tb pressed"><svg class="i"><use href="#minus"/></svg></span><span class="tb"><svg class="i"><use href="#zm"/></svg></span><span class="tb"><svg class="i"><use href="#hand"/></svg></span><span class="tb"><svg class="i"><use href="#zpm"/></svg></span><span class="tb"><svg class="i"><use href="#zred"/></svg></span><span class="tb"><svg class="i"><use href="#zpt"/></svg></span><span class="tb"><svg class="i"><use href="#xchk"/></svg></span><span class="tb"><svg class="i"><use href="#brush"/></svg></span><span class="tb"><svg class="i"><use href="#print"/></svg></span><span class="tb"><svg class="i"><use href="#wins"/></svg></span><span class="tb"><svg class="i"><use href="#grid"/></svg></span><span class="tb"><svg class="i"><use href="#stary"/></svg></span><span class="tb"><svg class="i"><use href="#starb"/></svg></span><span class="tb"><svg class="i"><use href="#panes"/></svg></span>
        </div>
        <svg class="canvas" viewBox="48 168 781 400" width="781" height="400">
          <path class="grid" d="M57.500 168V568M449.500 168V568M48 446.500H829"/>
          <path class="curve" d="M247 446 L262 446 A585 585 0 0 0 607 323"/>
          <path class="redl" d="M57.500 446.500H247M57.500 437V454"/>
          <g class="redc"><circle cx="247.500" cy="440" r="2.500"/><circle cx="247.500" cy="452" r="2.500"/><circle cx="604" cy="318" r="2.500"/><circle cx="611" cy="327" r="2.500"/><path d="M247.500 442V450M605 320L610 325"/></g>
          <path class="darkred" d="M607 323L718 237M712 230L724 243"/>
          <path class="tri-w" d="M163 446.500L142 441V452L163 446.500M670.700 273L658 291M449 411L430 422"/>
          <path class="tri-g" d="M142 446.500H163M670.700 273L652 282L658 291M449 411L427 413L430 422"/>
          <text class="lab" x="152" y="435" text-anchor="middle" dominant-baseline="central">90°0'0"</text>
          <text class="lab" x="152" y="458" text-anchor="middle" dominant-baseline="central">48.555</text>
          <text class="lab" x="247" y="505" text-anchor="middle" dominant-baseline="central" transform="rotate(90 247 505)">TC48.555</text>
          <text class="lab" x="57.500" y="490" text-anchor="middle" dominant-baseline="central" transform="rotate(90 57.500 490)">000.0</text>
          <text class="lab" x="433" y="403" text-anchor="middle" dominant-baseline="central" transform="rotate(-20 433 403)">R-150.000</text>
          <text class="lab" x="442" y="425" text-anchor="middle" dominant-baseline="central" transform="rotate(-20 442 425)">99.118</text>
          <text class="lab" x="654" y="270" text-anchor="middle" dominant-baseline="central" transform="rotate(-38 654 270)">52°8'22"</text>
          <text class="lab" x="670" y="288" text-anchor="middle" dominant-baseline="central" transform="rotate(-38 670 288)">36.040</text>
          <text class="lab" x="646" y="373" text-anchor="middle" dominant-baseline="central" transform="rotate(52 646 373)">CT147.674</text>
          <text class="lab" x="750" y="278" text-anchor="middle" dominant-baseline="central" transform="rotate(52 750 278)">183.714</text>
          <text class="thin" x="57" y="445">0</text>
          <text class="thin" x="77" y="445">N</text>
          <text class="thin" transform="translate(447 556) rotate(-90)">100 E</text>
          <text class="thin" transform="translate(56 561) rotate(-90)">0 E</text>
        </svg>
      </section>
      <span class="tick t1"></span><span class="tick t2"></span>

      <!-- Section window -->
      <section class="win section">
        <div class="wtitle st">
          <svg class="wico"><use href="#wsec"/></svg>
          <span class="wtext dark">Section LS "SA&nbsp;&nbsp;no VG-&gt;RS01 no VG"</span>
          <span class="capbtns secaps"><span class="cap"><svg class="capi"><use href="#cmin"/></svg></span></span>
        </div>
        <div class="wtools">
          <span class="tb"><svg class="i"><use href="#sheet"/></svg></span><span class="tb"><svg class="i"><use href="#plus"/></svg></span><span class="tb"><svg class="i"><use href="#minus"/></svg></span><span class="tb wide">10x</span><span class="tb"><svg class="i"><use href="#wave"/></svg></span><span class="tb"><svg class="i"><use href="#al"/></svg></span><span class="tb"><svg class="i"><use href="#arr"/></svg></span><span class="tb"><svg class="i"><use href="#tor"/></svg></span><span class="tb pressed"><svg class="i"><use href="#zm"/></svg></span><span class="tb"><svg class="i"><use href="#hand"/></svg></span><span class="tb"><svg class="i"><use href="#zpm"/></svg></span><span class="tb"><svg class="i"><use href="#zred"/></svg></span><span class="tb"><svg class="i"><use href="#zpt"/></svg></span><span class="tb"><svg class="i"><use href="#xchk"/></svg></span><span class="tb"><svg class="i"><use href="#brush"/></svg></span><span class="tb"><svg class="i"><use href="#print"/></svg></span><span class="tb"><svg class="i"><use href="#wins"/></svg></span><span class="tb"><svg class="i"><use href="#grid"/></svg></span><span class="tb"><svg class="i"><use href="#stary"/></svg></span><span class="tb"><svg class="i"><use href="#starb"/></svg></span><span class="tb"><svg class="i"><use href="#panes"/></svg></span>
        </div>
        <svg class="canvas" viewBox="49 638 784 203" width="784" height="203">
          <path class="grid" d="M68.500 638V841M170 638V841M271.500 638V841M373 638V841M474 638V841M575.500 638V841M676.500 638V841M778 638V841M49 739.500H833"/>
          <path class="bright" d="M267 821H670M267 821L271 817V821M670 821L666 817V821"/>
          <text class="thin" transform="translate(65 738)">0</text>
          <text class="thin" transform="translate(67 838) rotate(-90)">0</text>
          <text class="thin" transform="translate(168 838) rotate(-90)">25</text>
          <text class="thin" transform="translate(270 838) rotate(-90)">50</text>
          <text class="thin" transform="translate(371 838) rotate(-90)">75</text>
          <text class="thin" transform="translate(472 838) rotate(-90)">100</text>
          <text class="thin" transform="translate(574 838) rotate(-90)">125</text>
          <text class="thin" transform="translate(675 838) rotate(-90)">150</text>
          <text class="thin" transform="translate(776 838) rotate(-90)">175</text>
          <text class="cyan" x="422" y="816">-150.000R</text>
        </svg>
      </section>

      <!-- Horizontal segments dialog -->
      <section class="dlg hdlg">
        <div class="dtitle">
          <svg class="dico"><use href="#cube"/></svg>
          <span>Super Alignment Horizontal Segments</span>
          <span class="dclose">&#10005;</span>
        </div>
        <div class="dbody">
          <div class="darow">
            <span class="dalabel">Super Alignment</span>
            <span class="dafield">SA  no VG-&gt;RS01 no VG</span>
            <span class="btn pick"><svg class="i"><use href="#ptr"/></svg></span>
          </div>
          <div class="dtable">
            <div class="trow thead">
              <span>Segment Type</span><span>Start x</span><span>Start y</span><span>End x</span><span>End y</span><span>Start radius</span><span>End radius</span><span>Length</span><span>Offset</span><span>Start bearing</span><span>End bearing</span>
            </div>
            <div class="trow">
              <span>line</span><span>0</span><span>0</span><span>48.555086</span><span>0</span><span>0</span><span>0</span><span>48.555086</span><span></span><span>90°</span><span>90°</span>
            </div>
            <div class="trow">
              <span>arc</span><span>48.555086</span><span>0</span><span>140.616162</span><span>31.573828</span><span>-150</span><span>-150</span><span>99.118453</span><span></span><span>90°</span><span>52°08'22.34"</span>
            </div>
            <div class="trow">
              <span>line</span><span>140.616162</span><span>31.573828</span><span>169.070108</span><span>53.693101</span><span>0</span><span>0</span><span>36.040106</span><span></span><span>52°08'22.34"</span><span>52°08'22.34"</span>
            </div>
          </div>
        </div>
      </section>

      <!-- Vertical segments dialog -->
      <section class="dlg vdlg">
        <div class="dtitle">
          <svg class="dico"><use href="#cube"/></svg>
          <span>Super Alignment Vertical Segments</span>
        </div>
        <div class="dbody">
          <div class="darow">
            <span class="dalabel narrow">Super Alignment</span>
            <span class="dafield">SA  no VG-&gt;RS01 no VG</span>
            <span class="btn pick"><svg class="i"><use href="#ptr"/></svg></span>
          </div>
          <div class="dtable vt">
            <div class="vrow thead">
              <span>Segment Type</span><span>Start ch</span><span>Start ht</span><span>End ch</span><span>End ht</span><span>Ch length</span><span>Start grade</span><span>End grade</span><span>K value</span><span>Radius</span><span>Change of grade of segment</span><span>End deflection</span>
            </div>
            <p class="note">Civil radius – <span class="spell">Ifc</span> <span class="spell">RadiusOfCurvature</span> is the negative of this</p>
          </div>
          <div class="hscroll"><span class="sarrow">&#8249;</span><span class="sthumb"></span></div>
          <div class="status"><span class="statusf"></span></div>
          <div class="dfoot"><span class="push">Finish</span><span class="push">Help</span></div>
        </div>
      </section>
    </main>
  </div>

  <svg class="overlay" viewBox="0 0 1484 857" width="1484" height="857" aria-hidden="true">
    <rect class="ring" x="1101.500" y="212.500" width="121" height="98" rx="11"/>
    <path class="pointer" d="M856 543L1094 317"/>
    <path class="pointerhead" d="M1101 310.500L1095 324L1088 316.500z"/>
  </svg>
</div>
</body>
</html>
```
FILE: styles.css
```css
* { box-sizing: border-box; }
html, body { margin: 0; padding: 0; }
body {
  width: 1484px;
  height: 857px;
  overflow: hidden;
  font-family: Roboto, "Liberation Sans", sans-serif;
  font-size: 12px;
  letter-spacing: -.3px;
  color: #1c1c1c;
  background: #f0f0f0;
}
.defs { position: absolute; width: 0; height: 0; }
.app { position: relative; width: 1484px; height: 857px; display: flex; flex-direction: column; overflow: hidden; }

.i { width: 20px; height: 20px; display: block; flex: none; }

/* svg text inside icons */
.svgb { font: bold 9px "Liberation Sans", sans-serif; fill: #222; }
.svgaa { font: bold 15px "Liberation Serif", serif; fill: #3a40b0; }
.svgab { font: bold 9px "Liberation Sans", sans-serif; fill: #222; }
.svgsm { font: bold 9px "Liberation Sans", sans-serif; fill: #30304a; }
.svgtiny { font: 8px "Liberation Sans", sans-serif; fill: #222; }
.svgfx { font: italic bold 14px "Liberation Serif", serif; fill: #111; }
.svgfr { font: italic bold 10px "Liberation Serif", serif; fill: #a02020; }

/* title bar */
.titlebar { height: 27px; flex: none; background: #fff; display: flex; align-items: center; padding-left: 6px; }
.tico { width: 16px; height: 16px; }
.apptitle { margin-left: 4px; font-size: 12px; color: #222; }
.winmin { margin-left: auto; width: 11px; height: 1px; background: #222; }
.winmax { margin-left: 32px; margin-right: 35px; width: 10px; height: 10px; border: 1.5px solid #222; }

/* menu */
.menubar { height: 23px; flex: none; background: #f0f0f0; display: flex; align-items: center; gap: 14px; padding-left: 2px; letter-spacing: -.35px; }
.menubar .grip { margin-right: -5px; height: 16px; }
.menubar span { color: #1e1830; }

.grip {
  width: 3px;
  height: 18px;
  flex: none;
  background: repeating-linear-gradient(to bottom, #a8a8a8 0 1px, transparent 1px 2px);
}

/* first tool row */
.row1 { height: 25px; flex: none; background: #f0f0f0; display: flex; align-items: center; gap: 4px; padding-left: 1px; }
.field {
  height: 18px;
  flex: none;
  background: #fff;
  border-style: solid;
  border-width: 2px 1px 1px 2px;
  border-color: #a0a0a0 #e8e8e8 #e8e8e8 #a0a0a0;
  padding-left: 3px;
  line-height: 14px;
  color: #222;
  font-size: 12px;
}
.muted { color: #666; }
.w31 { width: 31px; } .w40 { width: 40px; } .w51 { width: 51px; } .w52 { width: 52px; }
.w62 { width: 62px; } .w83 { width: 83px; } .w84 { width: 84px; } .w105 { width: 105px; } .w158 { width: 158px; }

.btn {
  width: 19px;
  height: 21px;
  flex: none;
  display: flex;
  align-items: center;
  justify-content: center;
  background: #ecebe0;
  border-style: solid;
  border-width: 1px 2px 2px 1px;
  border-color: #fbfbfb #8e8e8e #8e8e8e #fbfbfb;
  overflow: hidden;
}
.btn .i { width: 16px; height: 16px; }
.w20 { width: 20px; } .w21 { width: 21px; }
.nbox { width: 15px; height: 15px; border: 1px solid #a05028; background: #f0dcc8; color: #8a3a10; font: bold 13px/13px "Liberation Serif", serif; text-align: center; }
.tbox { color: #8a3a18; font: bold 19px/19px "Liberation Serif", serif; }
.swatch { width: 15px; height: 15px; background: #00ffff; }

/* second tool row */
.row2 { height: 28px; flex: none; display: flex; align-items: center; padding-left: 7px; background: #f0f0f0; border-bottom: 1px solid #5a5a5a; padding-bottom: 2px; }
.cell { width: 21px; height: 22px; flex: none; display: flex; align-items: center; justify-content: center; position: relative; }
.cell .i { width: 18px; height: 18px; }
.c23 { width: 23px; } .c24 { width: 24px; } .c25 { width: 25px; } .c27 { width: 27px; } .c28 { width: 28px; }
.dd::after { content: ""; position: absolute; right: 1px; bottom: 1px; border-left: 4px solid transparent; border-bottom: 4px solid #111; }
.blue .i { border: 2px solid #3f9cf5; }
.g1 { margin: 0 4px; }
.g2 { margin: 0 5px 0 3px; }
.g3 { margin: 0 4px; }
.g4 { margin: 0 6px 0 4px; }
.g5 { margin: 0 2px 0 6px; }
.g6 { margin: 0 4px; }
.g7 { margin: 0 6px 0 4px; }
.mag { margin-left: 2px; height: 22px; }
.letters { display: flex; gap: 3px; flex: none; align-self: flex-start; margin-top: 1px; }
.key {
  height: 18px;
  flex: none;
  text-align: center;
  line-height: 15px;
  font-size: 12px;
  color: #222;
  background: #f0f0f0;
  border-style: solid;
  border-width: 1px 2px 2px 1px;
  border-color: #fff #8e8e8e #8e8e8e #fff;
}
.key.down { border-width: 2px 1px 1px 2px; border-color: #8e8e8e #fff #fff #8e8e8e; background: #f7f7f5; }
.l15 { width: 15px; } .l18 { width: 18px; } .l19 { width: 19px; } .l20 { width: 20px; } .l21 { width: 21px; } .l24 { width: 24px; }

/* work area */
.work { flex: 1; display: flex; min-height: 0; position: relative; }
.lefttools { width: 28px; flex: none; background: #f0f0f0; display: flex; flex-direction: column; align-items: stretch; overflow: hidden; }
.hgrip { height: 3px; flex: none; margin: 5px 4px 4px 3px; background: repeating-linear-gradient(to right, #a8a8a8 0 1px, transparent 1px 2px); }
.hgrip.first { margin: 2px 4px 1px 3px; }
.lcell { height: 21px; flex: none; display: flex; align-items: center; padding-left: 2px; position: relative; }
.lcell .i { width: 18px; height: 18px; }
.lcell.dd::after { right: 2px; bottom: 2px; }

.desk { position: relative; flex: 1; background: #a9a9a9; border-left: 2px solid #5a5a5a; border-bottom: 2px solid #e4e4e4; overflow: hidden; }

/* desktop windows: free canvas, placed by coordinates */
.win { position: absolute; display: flex; flex-direction: column; background: #dbe7f3; }
.plan2 { left: 800px; top: 0; width: 654px; height: 751px; padding-left: 3px; padding-bottom: 8px; }
.survey { left: 10px; top: 7px; width: 797px; height: 468px; border: 1px solid #4a4a4a; border-radius: 9px 9px 0 0; padding: 0 7px 9px 7px; }
.section { left: 11px; top: 477px; width: 800px; height: 271px; border: 1px solid #111; border-radius: 6px 6px 0 0; padding: 0 7px 9px 7px; background: #d8eaf6; }
.deskpatch { position: absolute; left: 1378px; top: 705px; width: 76px; height: 52px; background: #a9a9a9; border-left: 9px solid #dbe7f3; box-shadow: inset 1px 0 0 #3a3a3a; }
.tick { position: absolute; top: 474px; height: 2px; width: 9px; background: #dfe7f0; }
.t1 { left: 32px; } .t2 { left: 110px; }

.w2title { height: 13px; flex: none; display: flex; align-items: center; background: #d3e2f0; border-bottom: 1px solid #8c96a0; overflow: hidden; }
.w2title .wico { width: 14px; height: 14px; }
.w2title .wtext { margin-left: 4px; }
.wtitle { height: 28px; flex: none; display: flex; align-items: center; background: linear-gradient(#bcd2e6, #dfeaf4); margin: 0 -7px; padding: 6px 9px 0 8px; border-radius: 8px 8px 0 0; border-bottom: 2px solid #9aa3ac; }
.wtitle.st { background: linear-gradient(#a3bdd9, #cbddec); border-bottom-color: #8fa5ba; border-radius: 5px 5px 0 0; padding-top: 4px; }
.wico { width: 16px; height: 16px; flex: none; }
.wtext { margin-left: 3px; color: #8f98a2; font-size: 12px; white-space: nowrap; }
.wtext.dark { color: #26303a; }
.capbtns { margin-left: auto; display: flex; gap: 3px; }
.cap { width: 30px; height: 17px; border: 1px solid #8ba0b6; border-radius: 2px; background: #c9d9e8; display: flex; align-items: center; justify-content: center; overflow: hidden; }
.capi { width: 16px; height: 10px; display: block; flex: none; }
.secaps { margin-right: 65px; }
.tight { margin-right: 4px; align-self: flex-start; }
.tight .cap { height: 12px; border-top: 0; border-radius: 0 0 3px 3px; }

.wtools { height: 29px; flex: none; display: flex; align-items: center; gap: 3px; padding-left: 3px; background: #f0f0f0; overflow: hidden; }
.survey .wtools { margin-left: -1px; padding-left: 4px; }
.plan2 .wtools { height: 31px; padding-left: 1px; }
.tb {
  width: 21.900px;
  height: 24px;
  flex: none;
  display: flex;
  align-items: center;
  justify-content: center;
  background: #ecebe0;
  border-style: solid;
  border-width: 1px 2px 2px 1px;
  border-color: #fff #8e8e8e #8e8e8e #fff;
}
.tb .i { width: 18px; height: 18px; }
.tb.pressed { border-width: 2px 1px 1px 2px; border-color: #777 #ddd #ddd #777; }
.tb.wide { width: 47px; background: #f0f0f0; font-size: 12px; color: #333; }
.canvas { display: block; background: #000; flex: none; }
.black { flex: 1; background: #000; }

.grid { fill: none; stroke: #0f780f; stroke-width: 1; }
.curve { fill: none; stroke: #00c800; stroke-width: 1.300; }
.redl { fill: none; stroke: #ff1010; stroke-width: 1.300; }
.darkred { fill: none; stroke: #b00000; stroke-width: 1.300; }
.redc { fill: none; stroke: #e01010; stroke-width: 1; }
.tri-w { fill: none; stroke: #f0f0f0; stroke-width: 1; }
.tri-g { fill: none; stroke: #9a9a9a; stroke-width: 1; }
.bright { fill: none; stroke: #00e000; stroke-width: 1.300; }
.lab { font-family: "Liberation Sans", sans-serif; font-size: 15px; letter-spacing: 0; fill: #ffff14; stroke: #ffff14; stroke-width: .5; }
.thin { font-family: "DejaVu Sans Mono", monospace; font-size: 14.500px; letter-spacing: 0; fill: #d8d800; }
.cyan { font-family: "DejaVu Sans Mono", monospace; font-size: 15.800px; letter-spacing: 0; fill: #00d8d8; }

/* dialogs */
.dlg { position: absolute; display: flex; flex-direction: column; background: #fff; }
.hdlg { left: 750px; top: 55px; width: 684px; height: 250px; }
.vdlg { left: 740px; top: 294px; width: 714px; height: 411px; box-shadow: 0 0 0 1px #e8e8e8; }
.dtitle { height: 29px; flex: none; display: flex; align-items: center; padding-left: 8px; color: #8e8e8e; background: #fff; position: relative; }
.dico { width: 15px; height: 15px; margin-right: 4px; }
.dclose { position: absolute; right: 8px; top: 6px; color: #aaa; font-size: 14px; }
.dbody { flex: 1; display: flex; flex-direction: column; background: #f0f0f0; min-height: 0; }
.darow { height: 28px; flex: none; display: flex; align-items: center; padding: 0 8px 0 5px; }
.dalabel { width: 94px; flex: none; color: #1c1c1c; margin-top: -3px; }
.dalabel.narrow { width: 95px; }
.dafield {
  flex: 1;
  height: 19px;
  background: #ededed;
  border-style: solid;
  border-width: 2px 1px 1px 2px;
  border-color: #8a8a8a #d8d8d8 #d8d8d8 #8a8a8a;
  padding-left: 0;
  line-height: 17px;
  white-space: pre;
  color: #222;
}
.pick { margin-left: 5px; height: 20px; width: 20px; }
.vdlg .darow { height: 26px; padding-right: 0; }
.vdlg .pick { margin-left: 7px; margin-right: -12px; }
.dtable { flex: 1; margin: 0 6px 0 5px; background: #fff; border-left: 1px solid #a0a0a0; border-right: 1px solid #a0a0a0; min-height: 0; overflow: hidden; position: relative; }
.trow {
  display: grid;
  grid-template-columns: 77px 62px 57px 62px 56px 64px 60px 57px 39px 72px 65px;
  height: 22px;
}
.trow span, .vrow span {
  padding-left: 3px;
  border-right: 1px solid #e4e4e4;
  border-bottom: 1px solid #e4e4e4;
  line-height: 24px;
  white-space: nowrap;
  overflow: hidden;
  color: #1c1c1c;
  letter-spacing: -.85px;
}
.trow span:first-child { letter-spacing: -.3px; padding-left: 2px; }
.trow.thead { height: 23px; }
.trow.thead span, .vrow.thead span { background: #f0f0f0; border-color: #fff #b0b0b0 #b0b0b0 #fff; border-style: solid; border-width: 1px; line-height: 20px; letter-spacing: -.45px; }
.vt { margin: 0 0 0 5px; border-right: 0; height: 291px; flex: none; }
.vrow { display: grid; grid-template-columns: 77px 46px 44px 42px 41px 57px 62px 58px 44px 42px 152px 120px; height: 25px; }
.vrow.thead span { line-height: 22px; }
.note { position: absolute; left: 12px; top: 85px; margin: 0; font: 23.600px/32px "Liberation Sans", Arial, sans-serif; letter-spacing: 0; color: #000; white-space: nowrap; }
.spell { text-decoration: underline wavy #e02020 1px; text-underline-offset: 2px; }
.hscroll { height: 15px; flex: none; display: flex; margin-left: 4px; background: #f0f0f0; }
.sarrow { width: 18px; flex: none; text-align: center; font: bold 15px/12px "Liberation Sans", sans-serif; color: #333; }
.sthumb { width: 662px; flex: none; background: #cdcdcd; }
.status { height: 24px; flex: none; border-top: 2px solid #8a8a8a; padding: 2px 0 0 5px; margin-left: 1px; }
.statusf { display: block; height: 17px; background: #efefef; border-style: solid; border-width: 1px 0 1px 1px; border-color: #aaa #fff #fff #aaa; }
.dfoot { flex: 1; display: flex; align-items: flex-start; gap: 219px; padding-left: 221px; }
.push {
  width: 35px;
  height: 21px;
  text-align: center;
  line-height: 18px;
  background: #f0f0f0;
  border-style: solid;
  border-width: 1px 2px 2px 1px;
  border-color: #fff #777 #777 #fff;
  color: #1c1c1c;
}

/* hand-drawn annotation over the whole screenshot */
.overlay { position: absolute; left: 0; top: 0; pointer-events: none; }
.ring { fill: none; stroke: #ec1c24; stroke-width: 2; }
.pointer { fill: none; stroke: #ff0000; stroke-width: 1.800; }
.pointerhead { fill: #ff0000; }
```
